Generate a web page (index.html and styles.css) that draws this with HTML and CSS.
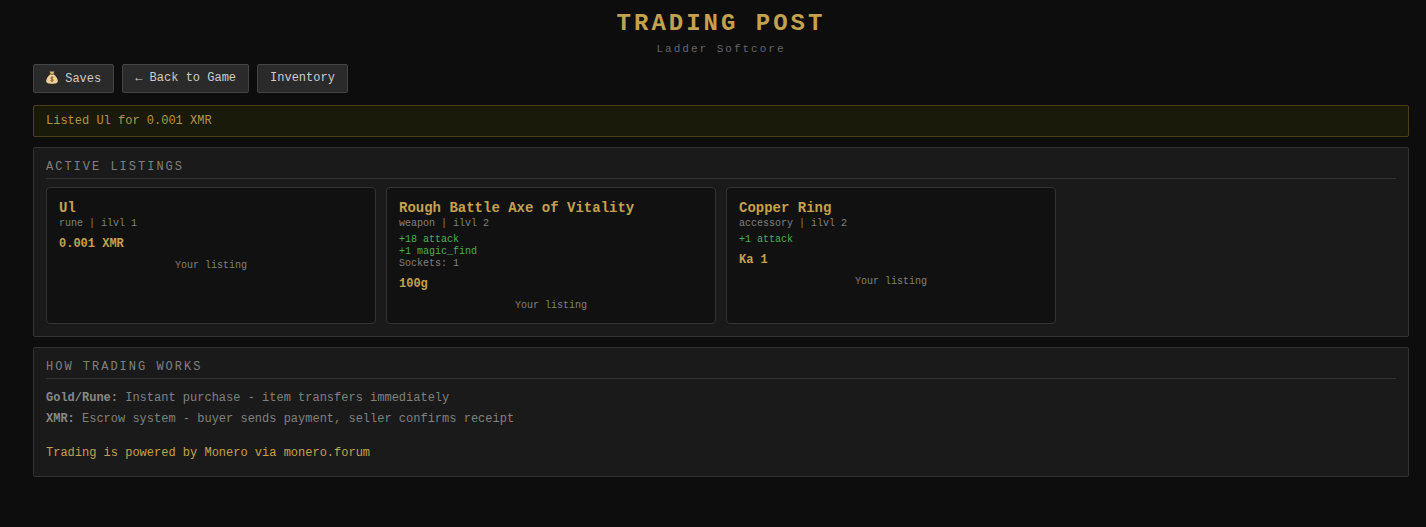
FILE: index.html
```html
<!DOCTYPE html>
<html lang="en">
<head>
    <meta charset="UTF-8">
    <meta name="viewport" content="width=device-width, initial-scale=1.0">
    <title>Trading Post</title>
    <link rel="stylesheet" href="styles.css">
</head>
<body>
    <main class="container">
        <header class="page-header">
            <h1 class="page-title">TRADING POST</h1>
            <div class="page-subtitle">Ladder Softcore</div>
        </header>

        <nav class="nav-row">
            <a href="#" class="btn"><svg class="bag-icon" viewBox="0 0 12 13" aria-hidden="true"><path d="M3.6 0.6 L8.4 0.6 L7.4 3 L4.6 3 Z" fill="#d9b56e"/><path d="M4.4 3.2 L7.6 3.2 C10 5 11.8 7.6 11.8 9.8 C11.8 12 10 12.8 6 12.8 C2 12.8 0.2 12 0.2 9.8 C0.2 7.6 2 5 4.4 3.2 Z" fill="#efd19a"/><rect x="4.4" y="2.7" width="3.2" height="0.9" fill="#9a6b2c"/><path d="M7.5 6.6 C7 6 5 6 4.7 7 C4.5 8.4 7.5 7.9 7.4 9.3 C7.2 10.3 5 10.2 4.4 9.5 M6 5.4 L6 11" fill="none" stroke="#7d5a22" stroke-width="0.9"/></svg> Saves</a>
            <a href="#" class="btn">← Back to Game</a>
            <a href="#" class="btn">Inventory</a>
        </nav>

        <div class="notice">Listed Ul for 0.001 XMR</div>

        <section class="panel">
            <h2 class="panel-title">ACTIVE LISTINGS</h2>
            <div class="listing-grid">
                <article class="listing">
                    <div class="item-name">Ul</div>
                    <div class="item-meta">rune | ilvl 1</div>
                    <div class="item-price">0.001 XMR</div>
                    <div class="item-owner">Your listing</div>
                </article>
                <article class="listing">
                    <div class="item-name">Rough Battle Axe of Vitality</div>
                    <div class="item-meta">weapon | ilvl 2</div>
                    <div class="item-stats">
                        <div class="stat-good">+18 attack</div>
                        <div class="stat-good">+1 magic_find</div>
                        <div>Sockets: 1</div>
                    </div>
                    <div class="item-price">100g</div>
                    <div class="item-owner">Your listing</div>
                </article>
                <article class="listing">
                    <div class="item-name">Copper Ring</div>
                    <div class="item-meta">accessory | ilvl 2</div>
                    <div class="item-stats">
                        <div class="stat-good">+1 attack</div>
                    </div>
                    <div class="item-price">Ka 1</div>
                    <div class="item-owner">Your listing</div>
                </article>
            </div>
        </section>

        <section class="panel">
            <h2 class="panel-title">HOW TRADING WORKS</h2>
            <p class="help-line"><strong>Gold/Rune:</strong> Instant purchase - item transfers immediately</p>
            <p class="help-line"><strong>XMR:</strong> Escrow system - buyer sends payment, seller confirms receipt</p>
            <p class="help-note">Trading is powered by Monero via monero.forum</p>
        </section>
    </main>
</body>
</html>
```

FILE: styles.css
```css
* { margin: 0; padding: 0; box-sizing: border-box; }
:root { --gold: #c4a14e; --line: #333; --muted: #808080; }
body { background-color: #0d0d0d; color: #ccc; font-family: 'Liberation Mono', 'Courier New', monospace; font-size: 12px; line-height: 1.2; }
.container { padding: 10px 17px 50px 33px; }
.page-header { text-align: center; margin-bottom: 8px; }
.page-title { color: var(--gold); font-size: 24px; font-weight: bold; letter-spacing: 3px; line-height: 27px; margin-bottom: 6px; }
.page-subtitle { color: #666; font-size: 11px; letter-spacing: 2px; line-height: 13px; }
.nav-row { display: flex; gap: 8px; margin-bottom: 12px; }
.btn { display: block; height: 29px; padding: 6px 12px; background-color: #2a2a2a; border: 1px solid #444; border-radius: 2px; color: #ccc; text-decoration: none; line-height: 14px; }
.bag-icon { display: inline-block; width: 12px; height: 13px; vertical-align: -2px; }
.notice { height: 32px; padding: 8px 12px; margin-bottom: 10px; background-color: #1a1a0a; border: 1px solid #4a3f1a; border-radius: 2px; color: #b3954a; line-height: 14px; }
.panel { padding: 12px; margin-bottom: 10px; background-color: #1a1a1a; border: 1px solid var(--line); border-radius: 2px; }
.panel-title { color: var(--muted); font-size: 12px; font-weight: normal; letter-spacing: 2px; line-height: 14px; padding-bottom: 4px; margin-bottom: 8px; border-bottom: 1px solid var(--line); }
.listing-grid { display: grid; grid-template-columns: repeat(4, 1fr); gap: 10px; }
.listing { height: 137px; padding: 12px; background-color: #111; border: 1px solid var(--line); border-radius: 4px; }
.item-name { color: var(--gold); font-size: 14px; font-weight: bold; line-height: 16px; }
.item-meta { color: var(--muted); font-size: 10px; line-height: 12px; margin-top: 2px; }
.item-stats { color: var(--muted); font-size: 10px; line-height: 12px; margin-top: 4px; }
.stat-good { color: #4caf50; }
.item-price { color: var(--gold); font-weight: bold; line-height: 14px; margin-top: 7px; }
.item-owner { color: var(--muted); font-size: 10px; line-height: 12px; margin-top: 9px; text-align: center; }
.help-line { color: var(--muted); line-height: 21px; }
.panel-title + .help-line { margin-top: 9px; }
.help-line strong { color: #888; }
.help-note { color: var(--gold); line-height: 14px; margin-top: 16px; margin-bottom: 4px; }
```
